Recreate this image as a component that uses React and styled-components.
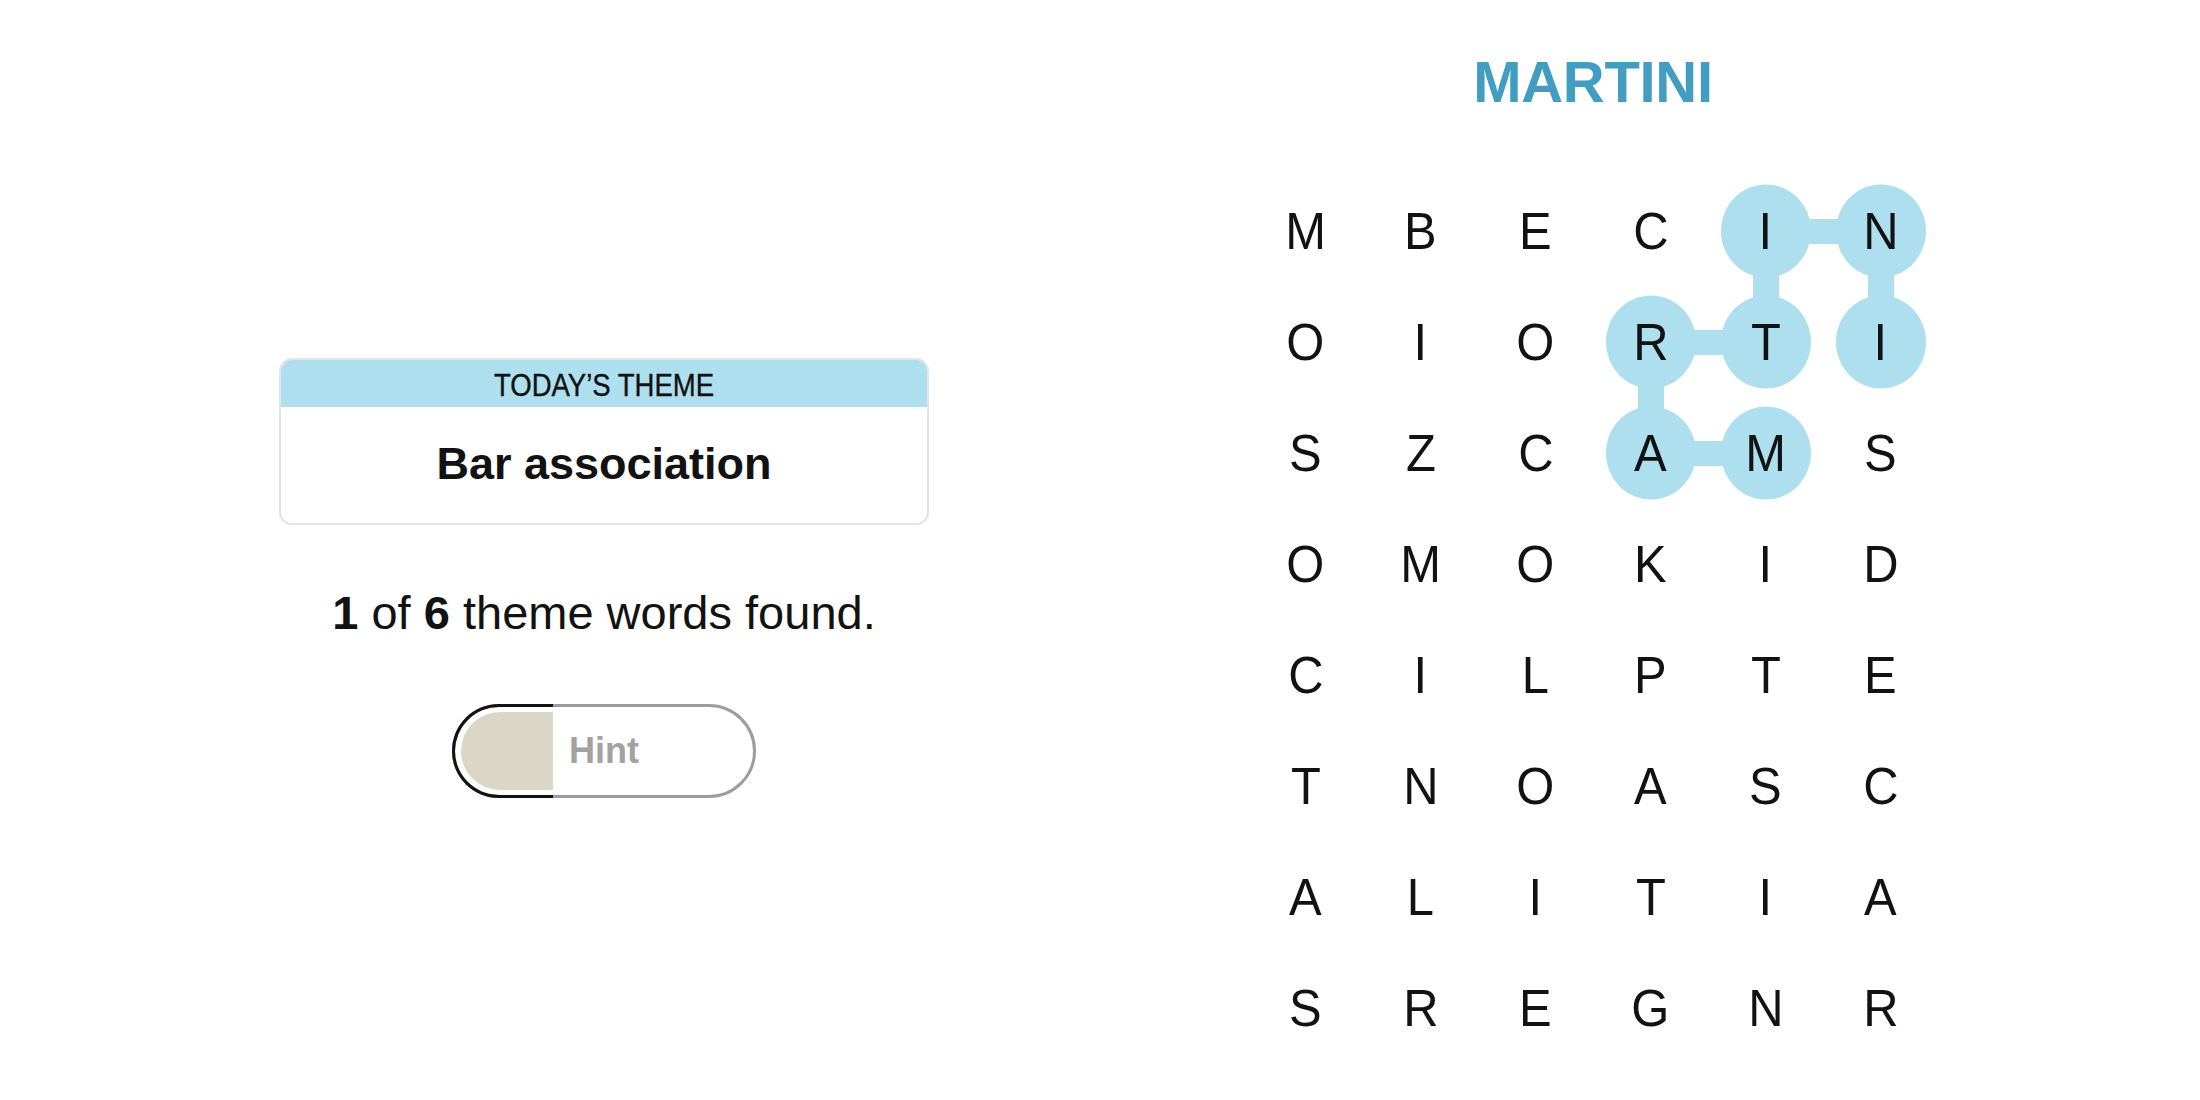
import React from "react"
import styled, { createGlobalStyle } from "styled-components"

const GlobalStyle = createGlobalStyle`
  html, body {
    margin: 0;
    padding: 0;
    background: #ffffff;
  }
  body {
    font-family: "Liberation Sans", Arial, sans-serif;
    color: #121212;
  }
`

const BLUE = "#aedfee"

const Page = styled.main`
  display: flex;
  align-items: flex-start;
  height: 1100px;
  padding-left: 279px;
  gap: 319px;
  box-sizing: border-box;
  overflow: hidden;
`

const Column = styled.section`
  display: flex;
  flex-direction: column;
  align-items: center;
  padding-top: ${p => p.$top}px;
`

const ThemeCard = styled.div`
  width: 650px;
  height: 167px;
  border: 2px solid #e4e4e4;
  border-radius: 13px;
  box-sizing: border-box;
  overflow: hidden;
  display: flex;
  flex-direction: column;
`

const ThemeHeader = styled.div`
  height: 47px;
  background: ${BLUE};
  display: flex;
  align-items: center;
  justify-content: center;
`

const HeaderText = styled.span`
  display: inline-block;
  font-size: 32px;
  line-height: 1;
  text-transform: uppercase;
  transform: scaleX(0.86);
  padding-top: 3px;
  -webkit-text-stroke: 0.4px #121212;
`

const ThemeBody = styled.div`
  flex: 1;
  display: flex;
  align-items: center;
  justify-content: center;
  font-size: 45px;
  font-weight: 700;
  padding-bottom: 2px;
`

const Found = styled.p`
  margin: 60px 0 0;
  font-size: 47px;
  line-height: 56px;
  b {
    font-weight: 700;
  }
`

const HintButton = styled.button`
  position: relative;
  margin-top: 63px;
  width: 304px;
  height: 94px;
  border: 3px solid #9d9d9d;
  border-radius: 47px;
  background: #ffffff;
  font-family: "Liberation Sans", Arial, sans-serif;
  font-size: 36px;
  font-weight: 700;
  color: #a2a2a2;
  padding: 0;
  display: flex;
  align-items: center;
  justify-content: center;
`

const Progress = styled.span`
  position: absolute;
  top: -3px;
  left: -3px;
  bottom: -3px;
  border: 3px solid #121212;
  border-right: none;
  border-radius: 47px 0 0 47px;
  padding: 5px 0 5px 6px;
  box-sizing: border-box;
  display: flex;
`

const ProgressFill = styled.span`
  flex: 1;
  background: #dad7c6;
  border-radius: 40px 0 0 40px;
`

const HintLabel = styled.span`
  position: relative;
`

const Title = styled.h1`
  margin: 0;
  font-size: 58px;
  line-height: 58px;
  font-weight: 700;
  color: #429dc2;
  letter-spacing: -0.3px;
`

const Board = styled.div`
  margin-top: 64px;
  display: grid;
  grid-template-columns: repeat(6, 115px);
  grid-auto-rows: 111px;
`

const Cell = styled.div`
  position: relative;
  display: flex;
  align-items: center;
  justify-content: center;
  font-size: 52px;
  color: #121212;

  &::before {
    content: "";
    display: ${p => (p.$on ? "block" : "none")};
    position: absolute;
    width: 90px;
    height: 93px;
    border-radius: 50%;
    background: ${BLUE};
    left: 50%;
    top: 50%;
    transform: translate(-50%, -50%);
  }
`

const LinkRight = styled.span`
  position: absolute;
  left: 50%;
  top: calc(50% - 12px);
  width: 115px;
  height: 25px;
  background: ${BLUE};
`

const LinkDown = styled.span`
  position: absolute;
  top: 50%;
  left: calc(50% - 13px);
  width: 26px;
  height: 111px;
  background: ${BLUE};
`

const Letter = styled.span`
  position: relative;
  z-index: 1;
  line-height: 1;
  display: inline-block;
  transform: scaleX(0.94);
`

const rows = [
  "MBECIN",
  "OIORTI",
  "SZCAMS",
  "OMOKID",
  "CILPTE",
  "TNOASC",
  "ALITIA",
  "SREGNR",
]

// MARTINI path
const found = ["2-4", "2-3", "1-3", "1-4", "0-4", "0-5", "1-5"]
const right = ["2-3", "1-3", "0-4"]
const down = ["1-3", "0-4", "0-5"]

const App = () => (
  <>
    <GlobalStyle />
    <Page>
      <Column $top={358}>
        <ThemeCard>
          <ThemeHeader>
            <HeaderText>Today’s Theme</HeaderText>
          </ThemeHeader>
          <ThemeBody>Bar association</ThemeBody>
        </ThemeCard>
        <Found>
          <b>1</b> of <b>6</b> theme words found.
        </Found>
        <HintButton>
          <Progress style={{ width: "101px" }}>
            <ProgressFill />
          </Progress>
          <HintLabel>Hint</HintLabel>
        </HintButton>
      </Column>
      <Column $top={53}>
        <Title>MARTINI</Title>
        <Board>
          {rows.map((row, r) =>
            row.split("").map((ch, c) => {
              const key = `${r}-${c}`
              return (
                <Cell key={key} $on={found.includes(key)}>
                  {right.includes(key) && <LinkRight />}
                  {down.includes(key) && <LinkDown />}
                  <Letter>{ch}</Letter>
                </Cell>
              )
            })
          )}
        </Board>
      </Column>
    </Page>
  </>
)

export default App
